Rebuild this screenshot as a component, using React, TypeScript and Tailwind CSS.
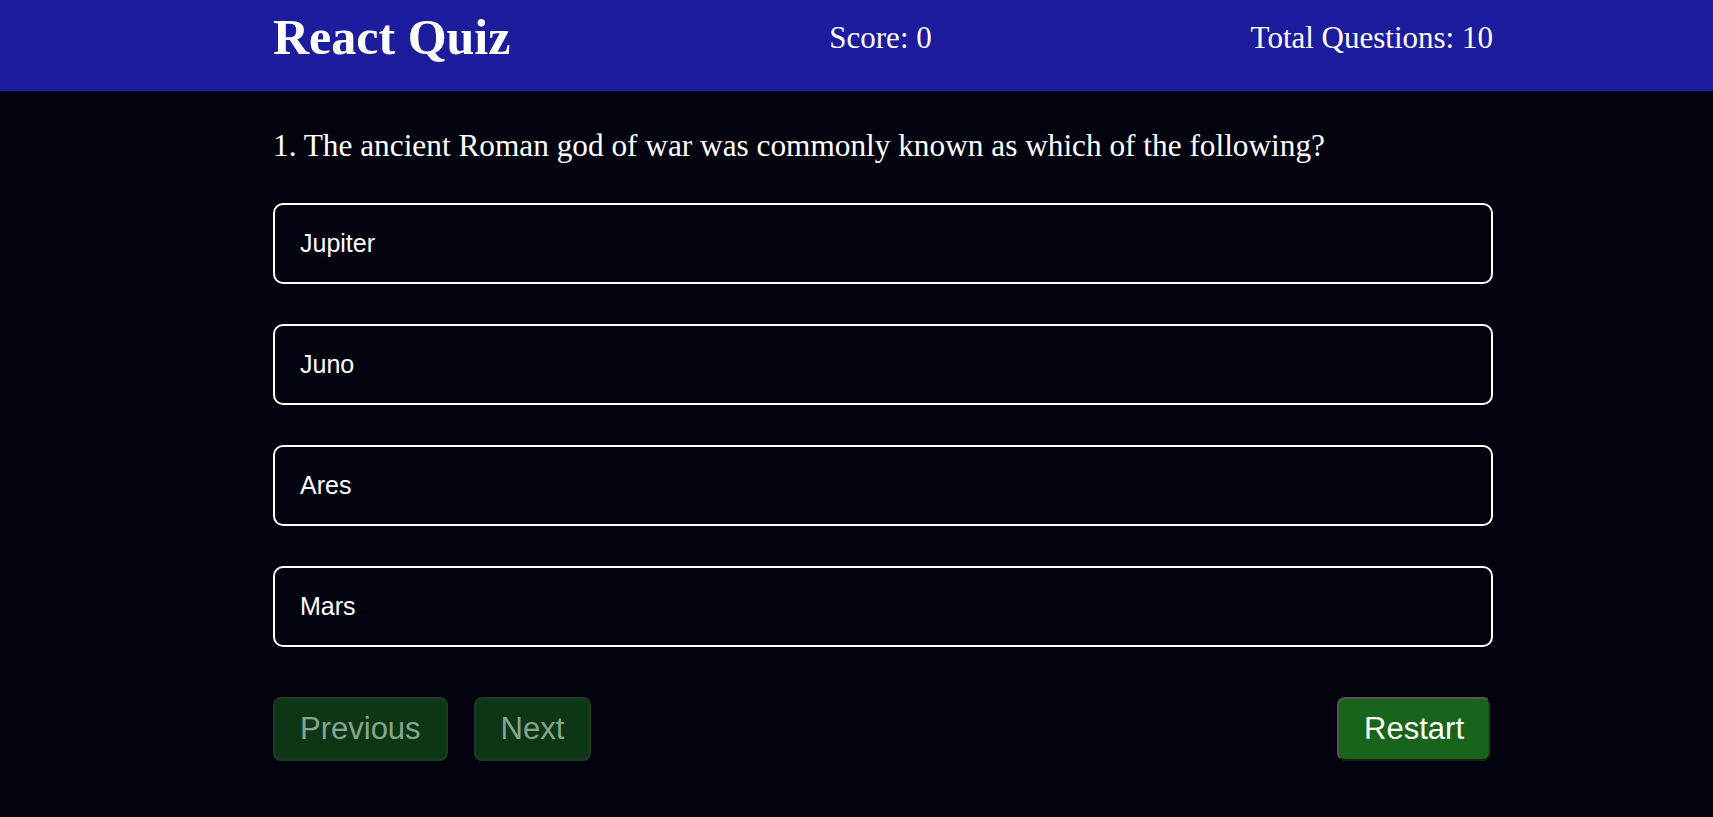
import { useState } from "react";

const question = {
  text: "The ancient Roman god of war was commonly known as which of the following?",
  options: ["Jupiter", "Juno", "Ares", "Mars"],
};

export default function App() {
  const [selected, setSelected] = useState<number | null>(null);
  const score = 0;
  const total = 10;

  return (
    <div className="min-h-screen bg-[#03030f] text-white">
      <header className="h-[91px] bg-[#1c1c9d] pb-[17px]">
        <div className="ml-[273px] flex h-full w-[1220px] flex-row items-center justify-between font-['Liberation_Serif',serif]">
          <h1 className="text-[50px] font-bold leading-[56px]">React Quiz</h1>
          <p className="text-[31px] leading-[35px]">Score: {score}</p>
          <p className="text-[31px] leading-[35px]">Total Questions: {total}</p>
        </div>
      </header>

      <main className="ml-[273px] w-[1220px]">
        <p className="mt-[37px] font-['Liberation_Serif',serif] text-[31.3px] leading-[35px]">
          1. {question.text}
        </p>

        <div className="mt-[40px] flex flex-col gap-[40px]">
          {question.options.map((option, i) => (
            <button
              key={option}
              onClick={() => setSelected(i)}
              className={`flex h-[81px] items-center rounded-[10px] border-2 border-white px-[25px] text-left font-['Liberation_Sans',sans-serif] text-[25px] ${
                selected === i ? "bg-[#10104a]" : "bg-[#03030f]"
              }`}
            >
              {option}
            </button>
          ))}
        </div>

        <div className="mt-[50px] flex flex-row items-center justify-between font-['Liberation_Sans',sans-serif]">
          <div className="flex flex-row gap-[26px]">
            <button
              disabled
              className="h-[64px] rounded-lg border-2 border-[#1d3a23] bg-[#0d3617] px-[25px] text-[31px] text-[#87a58c]"
            >
              Previous
            </button>
            <button
              disabled
              className="h-[64px] rounded-lg border-2 border-[#1d3a23] bg-[#0d3617] px-[25px] text-[31px] text-[#87a58c]"
            >
              Next
            </button>
          </div>
          <button className="mr-[2px] h-[64px] rounded-lg border-2 border-t-[#555555] border-l-[#555555] border-r-[#1c1c1c] border-b-[#1c1c1c] bg-[#17641a] px-[25px] text-[31px] text-white">
            Restart
          </button>
        </div>
      </main>
    </div>
  );
}
